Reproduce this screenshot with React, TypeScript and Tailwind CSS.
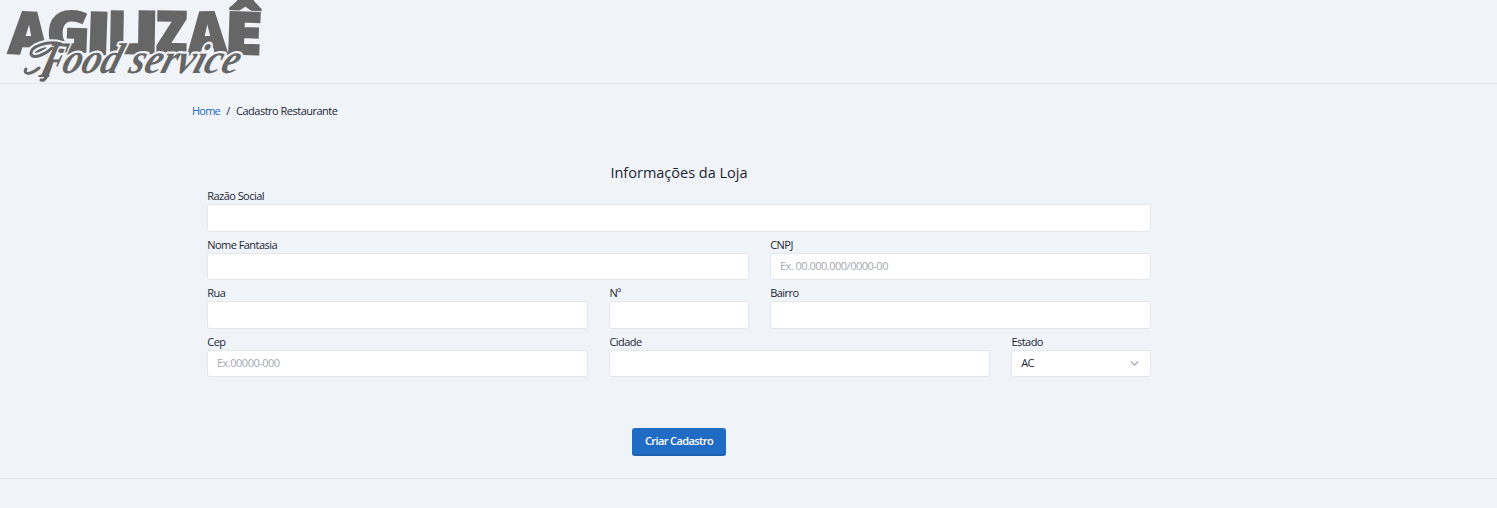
import React from "react";
import { ChevronDown } from "lucide-react";

type FieldProps = {
  label: string;
  span: string;
  placeholder?: string;
};

const labelClass = "block h-[16px] pl-[0.3px] text-[11px] leading-[16px] tracking-[-0.55px]";
const boxClass =
  "block h-[27.6px] w-full rounded-[3px] border border-[#e4e7eb] bg-white px-[9px] pb-[2px] text-[11px] tracking-[-0.5px] text-[#1b2434] outline-none placeholder:text-[#a5a9b1] placeholder:opacity-100";

function Field({ label, span, placeholder }: FieldProps) {
  return (
    <label className={`block ${span}`}>
      <span className={labelClass}>{label}</span>
      <input className={boxClass} placeholder={placeholder} />
    </label>
  );
}

const capitals = [
  { char: "A", x: 9, width: 39, y: 54, tilt: 3 },
  { char: "G", x: 47, width: 43, y: 53, tilt: 2 },
  { char: "I", x: 86, width: 25, y: 54, tilt: 2 },
  { char: "L", x: 107, width: 33, y: 53, tilt: 1 },
  { char: "I", x: 134, width: 25, y: 53, tilt: 1 },
  { char: "Z", x: 156, width: 31, y: 53, tilt: 1 },
  { char: "A", x: 188, width: 39, y: 54, tilt: -1 },
  { char: "Ê", x: 225, width: 37, y: 54, tilt: 2 },
];

const swash = "M61 44C47 40 30 47 31 54C33 60 46 54 52 48M52 62C48 73 46 82 41 80M39 68C29 76 23 74 26 69";

function Logo() {
  return (
    <svg className="block h-[83px] w-[270px]" viewBox="0 0 270 83" role="img" aria-label="Agilizaê Food service">
      <g fill="#666666" stroke="#666666" strokeWidth="2.2" fontFamily="'Open Sans', sans-serif" fontWeight="800" fontSize="58">
        {capitals.map((c, i) => (
          <text
            key={i}
            x={c.x}
            y={c.y}
            textLength={c.width}
            lengthAdjust="spacingAndGlyphs"
            transform={`rotate(${c.tilt} ${c.x + c.width / 2} 34)`}
          >
            {c.char}
          </text>
        ))}
      </g>
      <path d={swash} fill="none" stroke="#f0f4f9" strokeWidth="7" strokeLinecap="round" />
      <g
        fill="#666666"
        stroke="#f0f4f9"
        strokeWidth="4.5"
        strokeLinejoin="round"
        paintOrder="stroke"
        fontFamily="'Liberation Serif', serif"
        fontStyle="italic"
        fontWeight="700"
        transform="skewX(-18)"
      >
        <text x="63" y="77" fontSize="51" textLength="22" lengthAdjust="spacingAndGlyphs">F</text>
        <text x="84" y="73" fontSize="43" textLength="57" lengthAdjust="spacingAndGlyphs">ood</text>
        <text x="151" y="73" fontSize="42" textLength="109" lengthAdjust="spacingAndGlyphs">service</text>
      </g>
      <path d={swash} fill="none" stroke="#666666" strokeWidth="3" strokeLinecap="round" />
    </svg>
  );
}

export default function App() {
  return (
    <div className="flex h-[508px] flex-col bg-[#f0f4f9] font-['Open_Sans','Noto_Sans',sans-serif] text-[#1b2434]">
      <header className="h-[84px] shrink-0 border-b border-[#e1e6eb]">
        <Logo />
      </header>
      <main className="h-[395px] shrink-0 border-b border-[#e1e6eb]">
        <nav className="ml-[192px] flex pt-[19px] text-[11px] leading-[16px] tracking-[-0.5px]">
          <a href="#" className="w-[28px] tracking-[-0.8px] text-[#206bc4]">Home</a>
          <span className="w-[16px] text-center">/</span>
          <span>Cadastro Restaurante</span>
        </nav>
        <form className="ml-[207px] w-[944px] pt-[43px]">
          <h1 className="h-[26px] text-center text-[14.5px] leading-[22px] font-medium">Informações da Loja</h1>
          <div className="grid grid-cols-12 gap-x-[21px] gap-y-[5px]">
            <Field label="Razão Social" span="col-span-12" />
            <Field label="Nome Fantasia" span="col-span-7" />
            <Field label="CNPJ" span="col-span-5" placeholder="Ex. 00.000.000/0000-00" />
            <Field label="Rua" span="col-span-5" />
            <Field label="Nº" span="col-span-2" />
            <Field label="Bairro" span="col-span-5" />
            <Field label="Cep" span="col-span-5" placeholder="Ex.00000-000" />
            <Field label="Cidade" span="col-span-5" />
            <div className="col-span-2">
              <span className={labelClass}>Estado</span>
              <button type="button" className={`${boxClass} flex! items-center justify-between`}>
                <span className="pt-px">AC</span>
                <ChevronDown className="mt-px size-[13px] text-[#a0a4ac]" strokeWidth={2.5} />
              </button>
            </div>
          </div>
          <div className="flex justify-center pt-[51px]">
            <button type="button" className="h-[28px] w-[94px] rounded-[3px] border-b-2 border-[#1d60b0] bg-[#206bc4] text-[11px] font-semibold tracking-[-0.6px] text-white">
              Criar Cadastro
            </button>
          </div>
        </form>
      </main>
    </div>
  );
}
